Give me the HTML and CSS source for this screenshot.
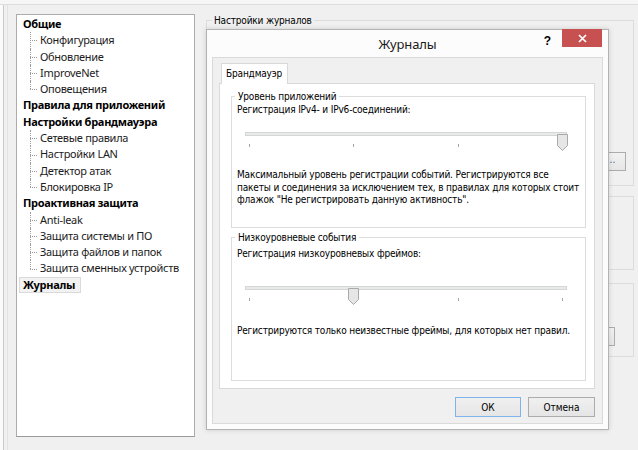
FILE: index.html
```html
<!DOCTYPE html>
<html lang="ru">
<head>
  <meta charset="UTF-8">
  <title>Журналы</title>
  <link rel="stylesheet" href="styles.css">
</head>
<body>
  <div id="screen">
    <div class="top-strip"></div>
    <div class="workspace">
      <div class="edge"></div>
      <div class="gutter"></div>

      <ul class="tree">
        <li><span class="tree-label">Общие</span>
          <ul class="tree-children">
            <li>Конфигурация</li>
            <li>Обновление</li>
            <li>ImproveNet</li>
            <li>Оповещения</li>
          </ul>
        </li>
        <li><span class="tree-label">Правила для приложений</span></li>
        <li><span class="tree-label">Настройки брандмауэра</span>
          <ul class="tree-children">
            <li>Сетевые правила</li>
            <li>Настройки LAN</li>
            <li>Детектор атак</li>
            <li>Блокировка IP</li>
          </ul>
        </li>
        <li><span class="tree-label">Проактивная защита</span>
          <ul class="tree-children">
            <li>Anti-leak</li>
            <li>Защита системы и ПО</li>
            <li>Защита файлов и папок</li>
            <li>Защита сменных устройств</li>
          </ul>
        </li>
        <li><span class="tree-label selected">Журналы</span></li>
      </ul>

      <div class="settings">
        <div class="bg-group bg-group-logs">
          <span class="bg-group-title">Настройки журналов</span>
          <div class="bg-row"><button class="bg-btn">...</button></div>
        </div>
        <div class="bg-group bg-group-mid"></div>
        <div class="bg-group bg-group-low">
          <div class="bg-row"><button class="bg-btn bg-btn-wide"></button></div>
        </div>
      </div>
    </div>

    <div class="dialog">
      <div class="titlebar">
        <span></span>
        <span class="dialog-title">Журналы</span>
        <div class="title-controls">
          <span class="help">?</span>
          <span class="close">
            <svg width="9" height="9" viewBox="0 0 9 9"><path d="M1 1L8 8M8 1L1 8" stroke="#fff" stroke-width="1.7"/></svg>
          </span>
        </div>
      </div>

      <div class="client">
        <div class="tab">Брандмауэр</div>
        <div class="tab-page">
          <div class="group group-app">
            <span class="group-title">Уровень приложений</span>
            <div class="field-label">Регистрация IPv4- и IPv6-соединений:</div>
            <div class="slider" style="--pos: 3">
              <div class="slider-track"></div>
              <div class="slider-ticks"><i></i><i></i><i></i><i></i></div>
              <svg class="slider-thumb" width="11" height="17" viewBox="0 0 11 17"><path d="M0.5 0.5H10.5V11.5L5.5 16.5L0.5 11.5Z"/></svg>
            </div>
            <p class="note">Максимальный уровень регистрации событий. Регистрируются все<br>пакеты и соединения за исключением тех, в правилах для которых стоит<br>флажок "Не регистрировать данную активность".</p>
          </div>

          <div class="group group-low">
            <span class="group-title">Низкоуровневые события</span>
            <div class="field-label">Регистрация низкоуровневых фреймов:</div>
            <div class="slider" style="--pos: 1">
              <div class="slider-track"></div>
              <div class="slider-ticks"><i></i><i></i><i></i><i></i></div>
              <svg class="slider-thumb" width="11" height="17" viewBox="0 0 11 17"><path d="M0.5 0.5H10.5V11.5L5.5 16.5L0.5 11.5Z"/></svg>
            </div>
            <p class="note">Регистрируются только неизвестные фреймы, для которых нет правил.</p>
          </div>
        </div>

        <div class="buttons">
          <button class="btn btn-default">ОК</button>
          <button class="btn">Отмена</button>
        </div>
      </div>
    </div>
  </div>
</body>
</html>
```

FILE: styles.css
```css
body {
  margin: 0;
  padding: 0;
  background: #f0f0f0;
  font-family: "Noto Sans", sans-serif;
  color: #000;
  overflow: hidden;
}

#screen {
  position: relative;
  width: 638px;
  height: 450px;
  overflow: hidden;
}

.top-strip {
  height: 4px;
  background: #f6f6f6;
  border-bottom: 1px solid #dedede;
}

.workspace {
  display: flex;
  height: 445px;
}

.edge {
  width: 3px;
  background: #fbfbfb;
  border-right: 1px solid #c9c9c9;
}

.gutter {
  width: 3px;
  border-right: 1px solid #e2e2e2;
}

/* tree on the left */
.tree {
  list-style: none;
  box-sizing: border-box;
  width: 179px;
  height: 423px;
  margin: 9px 0 0 8px;
  padding: 1px 0 0 6px;
  background: #fff;
  border: 1px solid #acacac;
  border-bottom-color: #9a9a9a;
  font-size: 11px;
  letter-spacing: -0.3px;
}

.tree-label,
.tree-children li {
  display: block;
  height: 16.3px;
  line-height: 16.3px;
  white-space: nowrap;
}

.tree-label {
  font-weight: bold;
}

.tree-label.selected {
  width: fit-content;
  height: 14.3px;
  line-height: 14.3px;
  margin: 0 0 0 -4px;
  padding: 0 5px 0 3px;
  background: #f2f2f2;
  border: 1px solid #dadada;
}

.tree-children {
  list-style: none;
  margin: 0;
  padding: 0 0 0 17px;
  color: #1c1c1c;
}

.tree-children li {
  position: relative;
}

.tree-children li::before {
  content: '';
  position: absolute;
  left: -10px;
  top: 0;
  bottom: 0;
  border-left: 1px dotted #9c9c9c;
}

.tree-children li:last-child::before {
  bottom: 50%;
}

.tree-children li::after {
  content: '';
  position: absolute;
  left: -10px;
  top: 50%;
  width: 7px;
  border-top: 1px dotted #9c9c9c;
}

/* settings page behind the dialog */
.settings {
  display: flex;
  flex-direction: column;
  width: 428px;
  margin: 15px 0 0 11px;
  font-family: "DejaVu Sans Condensed", "DejaVu Sans", sans-serif;
  font-stretch: condensed;
  font-size: 10px;
  letter-spacing: -0.17px;
}

.bg-group {
  box-sizing: border-box;
  border: 1px solid #dcdcdc;
}

.bg-group-logs {
  height: 166px;
}

.bg-group-mid {
  height: 74px;
  margin-top: 10px;
}

.bg-group-low {
  height: 74px;
  margin-top: 13px;
}

.bg-group-title {
  display: block;
  width: fit-content;
  margin: -7px 0 0 5px;
  padding: 0 2px;
  line-height: 13px;
  background: #f0f0f0;
}

.bg-row {
  display: flex;
  justify-content: flex-end;
  padding-right: 7px;
  margin-top: 125px;
}

.bg-group-low .bg-row {
  margin-top: 43px;
  padding-right: 18px;
}

.bg-btn {
  box-sizing: border-box;
  width: 30px;
  height: 19px;
  padding: 0 0 4px;
  font: inherit;
  color: #3a5a9a;
  background: linear-gradient(#f2f2f2, #e6e6e6);
  border: 1px solid #acacac;
}

/* dialog window */
.dialog {
  position: absolute;
  left: 206px;
  top: 29px;
  box-sizing: border-box;
  width: 403px;
  height: 401px;
  display: flex;
  flex-direction: column;
  padding: 0 5px 5px;
  background: #fcfcfc;
  border: 1px solid #b3b3b3;
  box-shadow: 0 0 5px rgba(0, 0, 0, 0.15);
  font-family: "DejaVu Sans Condensed", "DejaVu Sans", sans-serif;
  font-stretch: condensed;
  font-size: 10px;
  letter-spacing: -0.17px;
}

.titlebar {
  display: grid;
  grid-template-columns: 1fr auto 1fr;
  height: 27px;
}

.dialog-title {
  align-self: center;
  padding-top: 1px;
  font-family: "Noto Sans", sans-serif;
  font-stretch: normal;
  font-size: 13px;
  letter-spacing: -0.1px;
  color: #1a1a1a;
}

.title-controls {
  justify-self: end;
  display: flex;
  align-items: flex-start;
  margin-right: 1px;
}

.help {
  margin: 4px 11px 0 0;
  font-family: "Liberation Sans", sans-serif;
  font-weight: bold;
  font-size: 12px;
}

.close {
  display: flex;
  align-items: center;
  justify-content: center;
  width: 40px;
  height: 18px;
  margin-top: -1px;
  background: #c75050;
}

.client {
  flex: 1;
  display: flex;
  flex-direction: column;
  padding: 5px 7px 6px 6px;
  background: #f0f0f0;
  border: 1px solid #dadada;
}

.tab {
  position: relative;
  z-index: 1;
  width: fit-content;
  height: 20px;
  margin: 0 0 -1px 2px;
  padding: 0 5px 0 4px;
  line-height: 19px;
  background: #fff;
  border: 1px solid #d9d9d9;
  border-bottom: none;
}

.tab-page {
  flex: 1;
  display: flex;
  flex-direction: column;
  padding: 12px 8px 0 11px;
  background: #fff;
  border: 1px solid #d9d9d9;
}

.group {
  box-sizing: border-box;
  padding: 0 5px;
  border: 1px solid #dcdcdc;
}

.group-app {
  height: 132px;
}

.group-low {
  height: 144px;
  margin-top: 9px;
}

.group-title {
  display: block;
  width: fit-content;
  margin: -7px 0 0 -2px;
  padding: 0 3px;
  line-height: 13px;
  background: #fff;
}

.field-label {
  line-height: 13px;
}

.group-low .field-label {
  margin-top: 3px;
}

.slider {
  position: relative;
  width: 322px;
  height: 26px;
  margin: 16px 0 0 8px;
}

.group-low .slider {
  margin-top: 26px;
}

.slider-track {
  box-sizing: border-box;
  height: 4px;
  margin-top: 8px;
  background: #e7eaea;
  border: 1px solid #d6d6d6;
}

.slider-ticks {
  display: flex;
  justify-content: space-between;
  padding: 0 4px;
  margin-top: 8px;
}

.slider-ticks i {
  width: 1px;
  height: 3px;
  background: #a5a5a5;
}

.slider-thumb {
  position: absolute;
  top: 2px;
  left: calc(var(--pos) / 3 * 313px - 1px);
}

.slider-thumb path {
  fill: #e6e6e6;
  stroke: #a9a9a9;
}

.note {
  margin: 11px 0 0;
  line-height: 12.5px;
  white-space: nowrap;
}

.group-low .note {
  margin-top: 13px;
}

.buttons {
  display: flex;
  justify-content: flex-end;
  gap: 7px;
  margin-top: 8px;
}

.btn {
  box-sizing: border-box;
  width: 67px;
  height: 20px;
  padding: 0;
  font: inherit;
  color: #000;
  background: linear-gradient(#f0f0f0, #e5e5e5);
  border: 1px solid #acacac;
}

.btn-default {
  width: 66px;
  border-color: #7eb4ea;
}
```
